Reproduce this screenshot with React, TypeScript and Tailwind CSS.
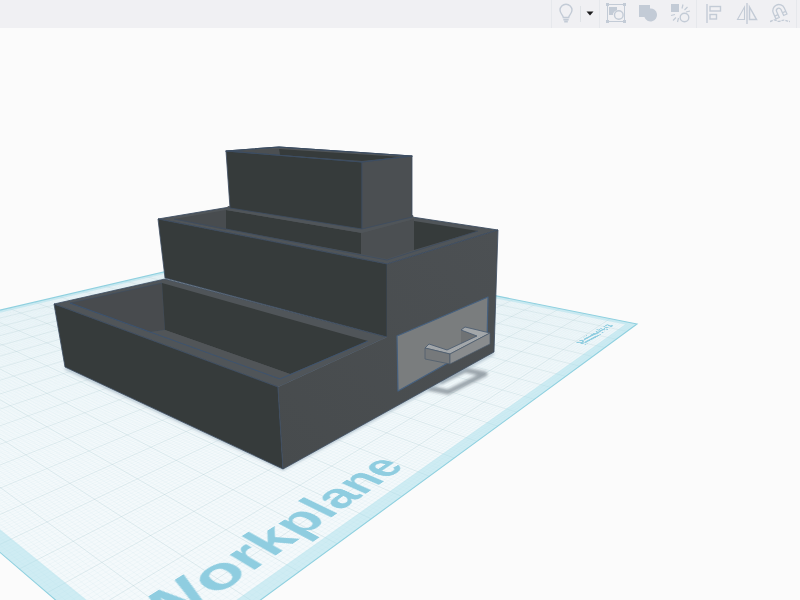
import React from 'react';

type Point = [number, number];

// corners of the workplane on the canvas: back left, back, right, front
const PLANE: Point[] = [[-222, 334], [262, 221], [637, 296], [150, 653]];

const solvePlane = ([p0, p1, p2, p3]: Point[]) => {
  const dx1 = p1[0] - p2[0], dy1 = p1[1] - p2[1];
  const dx2 = p3[0] - p2[0], dy2 = p3[1] - p2[1];
  const sx = p0[0] - p1[0] + p2[0] - p3[0];
  const sy = p0[1] - p1[1] + p2[1] - p3[1];
  const den = dx1 * dy2 - dx2 * dy1;
  const g = (sx * dy2 - dx2 * sy) / den;
  const h = (dx1 * sy - sx * dy1) / den;
  return {
    a: p1[0] - p0[0] + g * p1[0], b: p3[0] - p0[0] + h * p3[0], c: p0[0],
    d: p1[1] - p0[1] + g * p1[1], e: p3[1] - p0[1] + h * p3[1], f: p0[1],
    g, h,
  };
};

const m = solvePlane(PLANE);

const project = (u: number, v: number): Point => {
  const w = m.g * u + m.h * v + 1;
  return [(m.a * u + m.b * v + m.c) / w, (m.d * u + m.e * v + m.f) / w];
};

const poly = (pts: Point[]) => pts.map(p => project(p[0], p[1]).map(n => n.toFixed(2)).join(',')).join(' ');

const gridPath = (count: number, skip: number) => {
  let d = '';
  for (let i = 1; i < count; i++) {
    if (skip && i % skip === 0) continue;
    const t = i / count;
    d += `M${project(t, 0).join(' ')}L${project(t, 1).join(' ')}`;
    d += `M${project(0, t).join(' ')}L${project(1, t).join(' ')}`;
  }
  return d;
};

const MAJOR = gridPath(20, 0);
const MINOR = gridPath(200, 10);

// maps a square layer of the given size onto the workplane
const planeTransform = (size: number) => `matrix3d(${[
  m.a / size, m.d / size, 0, m.g / size,
  m.b / size, m.e / size, 0, m.h / size,
  0, 0, 1, 0,
  m.c, m.f, 0, 1,
].join(',')})`;

const ToolButton: React.FC<{ label: string; className: string; children: React.ReactNode }> = ({ label, className, children }) => (
  <button type="button" aria-label={label} className={`flex h-full items-center justify-center pb-0.5 text-[#c3cbd6] ${className}`}>
    {children}
  </button>
);

const Icon: React.FC<{ children: React.ReactNode }> = ({ children }) => (
  <svg viewBox="0 0 22 22" className="h-[22px] w-[22px]" fill="none" stroke="currentColor" strokeWidth="1.4">
    {children}
  </svg>
);

const Toolbar = () => (
  <header className="flex h-7 shrink-0 justify-end bg-[#f0f0f3] pr-[3px]">
    <div className="flex h-full items-center border-l border-[#e6e8ec]">
      <ToolButton label="Show all" className="w-7">
        <Icon>
          <path d="M8.3 15.5c0-2.500-3.300-3.700-3.300-7.500a6 5.800 0 0 1 12 0c0 3.800-3.300 5-3.300 7.500z" />
          <path d="M8.3 17.6h5.400M9.200 19.600h3.600" strokeWidth="1.8" />
        </Icon>
      </ToolButton>
      <span className="h-4 w-px bg-[#dfe2e6]" />
      <ToolButton label="Visibility options" className="w-[18px]">
        <svg viewBox="0 0 8 5" className="h-[5px] w-2"><path d="M.5.5h7L4 4.500z" fill="#1c1c1e" /></svg>
      </ToolButton>
    </div>
    <div className="flex h-full items-center border-l border-[#e6e8ec]">
      <ToolButton label="Group" className="w-8">
        <Icon>
          <rect x="2.5" y="2.5" width="17" height="17" strokeWidth="1" />
          <path d="M1 1h3v3H1zM18 1h3v3h-3zM1 18h3v3H1zM18 18h3v3h-3z" fill="currentColor" stroke="none" />
          <path d="M4 5h8v3.200A5.300 5.300 0 0 0 7.900 13H4z" fill="currentColor" stroke="none" />
          <circle cx="13.8" cy="13" r="4.3" />
        </Icon>
      </ToolButton>
      <ToolButton label="Union" className="w-8">
        <Icon>
          <path d="M2 3h11v3.500a6.500 6.500 0 1 1-5.600 8.500H2z" fill="currentColor" stroke="none" />
        </Icon>
      </ToolButton>
      <ToolButton label="Ungroup" className="w-8">
        <Icon>
          <path d="M2 2h8v8H2z" fill="currentColor" stroke="none" />
          <circle cx="15.5" cy="15.5" r="4.3" />
          <path d="M13 6.500l1-4M15.500 8l3-3M17 10l4-1M2 13.500l4-1M4 18.500l3-3M8.500 20l1-4" strokeWidth="1.2" />
        </Icon>
      </ToolButton>
    </div>
    <div className="flex h-full items-center border-x border-[#e6e8ec]">
      <ToolButton label="Align" className="w-[33px]">
        <Icon>
          <path d="M4 2v19" />
          <rect x="7" y="4.5" width="10.5" height="4.5" />
          <rect x="7" y="12.5" width="6.5" height="4.5" />
        </Icon>
      </ToolButton>
      <ToolButton label="Mirror" className="w-[33px]">
        <Icon>
          <path d="M11 1v21" />
          <path d="M8.500 5v12.500H1.500z" strokeWidth="1.1" />
          <path d="M13.500 5v12.500h7z" strokeWidth="1.5" />
        </Icon>
      </ToolButton>
      <ToolButton label="Cruise" className="w-[33px]">
        <Icon>
          <g transform="rotate(-24 10 9)" strokeWidth="1.3">
            <path d="M4 15V8.500a6 6 0 0 1 12 0V15h-3.600V8.500a2.400 2.400 0 0 0-4.800 0V15z" />
            <path d="M4 12h3.600M12.400 12H16" />
          </g>
          <path d="M1 19.500c2-.2 3-2 5-1.500s3 2 5 1.200 3-1.500 5-1 3 1.300 5 1.300" strokeDasharray="3 1" strokeWidth="1.3" />
        </Icon>
      </ToolButton>
    </div>
  </header>
);

const Workplane = () => (
  <g>
    <polygon points={poly([[0, 0], [1, 0], [1, 1], [0, 1]])} fill="#f4f9fb" />
    <path d={MINOR} stroke="#b3dbe6" strokeWidth="0.4" opacity="0.28" fill="none" />
    <path d={MAJOR} stroke="#a6c9cf" strokeWidth="0.7" opacity="0.42" fill="none" />
    <path
      d={`M${poly([[0, 0], [1, 0], [1, 1], [0, 1]])}ZM${poly([[0.016, 0.016], [0.984, 0.016], [0.984, 0.984], [0.016, 0.984]])}Z`}
      fill="#a9e0ec"
      fillRule="evenodd"
      opacity="0.5"
    />
    <polygon points={poly([[0, 0], [1, 0], [1, 1], [0, 1]])} fill="none" stroke="#8fd0df" strokeWidth="1.1" />
  </g>
);

const DARK = '#363b3b';
const SIDE = '#4b4f52';
const RIM = '#505559';
const EDGE = '#3d4d61';

const Organizer = () => (
  <g strokeLinejoin="round">
    {/* shadow of the handle */}
    <path d="M428 388L448 392L485 374L465 370L440 382" fill="none" stroke="#858f97" strokeWidth="5" filter="url(#soft)" opacity="0.8" />
    <path d="M65 368L283 469L494 353" fill="none" stroke="#9fb2c0" strokeWidth="2" filter="url(#soft)" />

    {/* lower tray */}
    <polygon points="54,304 165,279 387,337 278,387" fill={RIM} stroke={EDGE} strokeWidth="0.8" />
    <polygon points="70,303 162,283 165,330 150,332" fill="#484b4e" stroke={EDGE} strokeWidth="0.6" />
    <polygon points="162,283 368,341 290,374 165,330" fill={DARK} />
    <polygon points="165,330 290,374 280,379 150,332" fill="#515558" />
    <path d="M70 303L280 379L368 341" fill="none" stroke="#3c5472" strokeWidth="0.9" />
    <polygon points="54,304 278,387 283,469 65,367" fill={DARK} stroke={EDGE} strokeWidth="0.8" />

    {/* middle tray */}
    <polygon points="158,219 230,207 412,217 498,230 387,264" fill={RIM} stroke={EDGE} strokeWidth="0.9" />
    <polygon points="174,219 226,210 226,230" fill="#484c4f" />
    <polygon points="226,210 362,233 361,254 226,229" fill={DARK} />
    <polygon points="361,233 414,219 414,250 387,259 361,254" fill={SIDE} />
    <polygon points="414,221 478,231 414,250" fill={DARK} />
    <path d="M174 219L387 260L478 231" fill="none" stroke={EDGE} strokeWidth="0.8" />
    <path d="M158 219L387 264V337L165 278Z" fill={DARK} stroke={EDGE} strokeWidth="0.8" />

    {/* shared right side */}
    <polygon points="278,387 387,337 387,264 498,230 494,352 283,469" fill="url(#side)" />
    <path d="M278 387L283 469L494 352L498 230L387 264" fill="none" stroke={EDGE} strokeWidth="0.8" />

    {/* upper box */}
    <polygon points="226,151 279,147 412,156 362,162" fill={RIM} stroke={EDGE} strokeWidth="1.2" />
    <polygon points="235,151 279,149 280,155" fill="#4b4f52" />
    <polygon points="279,149 402,157 362,161 280,155" fill={DARK} />
    <polygon points="228,206 362,228 413,215 414,219 362,233 226,210" fill={RIM} />
    <polygon points="226,151 362,162 362,229 230,208" fill={DARK} stroke={EDGE} strokeWidth="0.8" />
    <polygon points="362,162 412,156 412,217 362,229" fill={SIDE} stroke={EDGE} strokeWidth="0.8" />
    <path d="M226 151L279 147L412 156L362 162Z" fill="none" stroke={EDGE} strokeWidth="1.2" />

    {/* drawer and handle */}
    <polygon points="397,336 488,297 487,341 398,391" fill="#7a7d7e" stroke="#47617f" strokeWidth="1.2" />
    <polygon points="461,330 477,336 461,344" fill="#6f7274" />
    <polygon points="425,348 429,344 447,350 477,336 461,330 465,327 490,333 450,354" fill="#a3a7aa" stroke="#46586d" strokeWidth="0.8" />
    <polygon points="425,348 450,354 450,364 425,359" fill="#76797b" stroke="#4a5a6c" strokeWidth="0.7" />
    <polygon points="450,354 490,333 490,344 450,364" fill="#898c8e" stroke="#4a5a6c" strokeWidth="0.7" />
  </g>
);

const App = () => (
  <div className="flex h-screen flex-col overflow-hidden bg-[#fbfbfb] font-['Liberation_Sans',sans-serif]">
    <Toolbar />
    <main className="relative min-h-0 flex-1 overflow-hidden">
      <svg viewBox="0 0 800 572" className="absolute top-0 left-0 h-[572px] w-[800px] overflow-visible">
        <defs>
          <filter id="soft" x="-20%" y="-20%" width="140%" height="140%"><feGaussianBlur stdDeviation="1.4" /></filter>
          <linearGradient id="side" x1="1" y1="0" x2="0" y2="1">
            <stop offset="0" stopColor="#4c5053" />
            <stop offset="1" stopColor="#474b4d" />
          </linearGradient>
        </defs>
        <Workplane />
        <g transform="translate(0 -28)"><Organizer /></g>
      </svg>
      <div
        className="absolute top-0 left-0 h-[1000px] w-[1000px] origin-top-left text-[#8fcde0]"
        style={{ transform: planeTransform(1000) }}
      >
        <span className="absolute bottom-[23px] left-[25px] text-[64px] leading-none font-bold">Workplane</span>
      </div>
      <div
        className="absolute top-0 left-0 h-[500px] w-[500px] origin-top-left text-[#8fcde0]"
        style={{ transform: planeTransform(500) }}
      >
        <span className="absolute bottom-[13px] left-[421px] text-[12px] leading-none font-bold">Millimeters</span>
      </div>
    </main>
  </div>
);

export default App;
